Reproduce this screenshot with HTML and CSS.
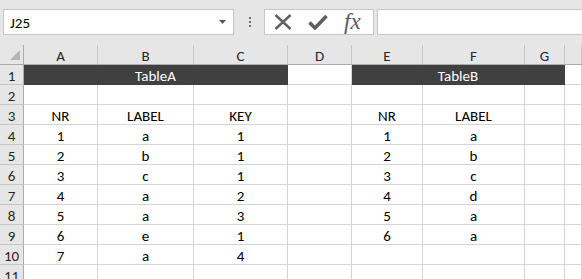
FILE: index.html
```html
<!DOCTYPE html>
<html>
<head>
<meta charset="utf-8">
<link rel="stylesheet" href="styles.css">
</head>
<body>
<div class="app">
  <div class="toolbar">
    <div class="namebox">
      <span class="namebox-text">J25</span>
      <svg class="dd" width="7" height="4" viewBox="0 0 7 4"><path d="M0 0h7L3.5 4z" fill="#595959"/></svg>
    </div>
    <div class="dots"><span></span><span></span><span></span></div>
    <div class="fxbox">
      <svg class="ic-x" width="18" height="16" viewBox="0 0 18 16"><path d="M1.5 1L16.5 15M16.5 1L1.5 15" stroke="#606060" stroke-width="2.4" fill="none"/></svg>
      <svg class="ic-check" width="20" height="16" viewBox="0 0 20 16"><path d="M1.5 8.5L7 14L18.5 2" stroke="#606060" stroke-width="3.6" fill="none"/></svg>
      <span class="fx">fx</span>
    </div>
    <div class="formula"></div>
  </div>
  <div class="sheet">
    <div class="corner"><span class="tri"></span></div>
    <div class="ch">A</div><div class="ch">B</div><div class="ch">C</div><div class="ch">D</div><div class="ch">E</div><div class="ch">F</div><div class="ch">G</div><div class="ch"></div>

    <div class="rh">1</div>
    <div class="c band span3">TableA</div><div class="c"></div><div class="c band span3">TableB</div><div class="c"></div>

    <div class="rh">2</div>
    <div class="c"></div><div class="c"></div><div class="c"></div><div class="c"></div><div class="c"></div><div class="c"></div><div class="c"></div><div class="c"></div>

    <div class="rh">3</div>
    <div class="c">NR</div><div class="c">LABEL</div><div class="c">KEY</div><div class="c"></div><div class="c">NR</div><div class="c">LABEL</div><div class="c"></div><div class="c"></div>

    <div class="rh">4</div>
    <div class="c">1</div><div class="c">a</div><div class="c">1</div><div class="c"></div><div class="c">1</div><div class="c">a</div><div class="c"></div><div class="c"></div>

    <div class="rh">5</div>
    <div class="c">2</div><div class="c">b</div><div class="c">1</div><div class="c"></div><div class="c">2</div><div class="c">b</div><div class="c"></div><div class="c"></div>

    <div class="rh">6</div>
    <div class="c">3</div><div class="c">c</div><div class="c">1</div><div class="c"></div><div class="c">3</div><div class="c">c</div><div class="c"></div><div class="c"></div>

    <div class="rh">7</div>
    <div class="c">4</div><div class="c">a</div><div class="c">2</div><div class="c"></div><div class="c">4</div><div class="c">d</div><div class="c"></div><div class="c"></div>

    <div class="rh">8</div>
    <div class="c">5</div><div class="c">a</div><div class="c">3</div><div class="c"></div><div class="c">5</div><div class="c">a</div><div class="c"></div><div class="c"></div>

    <div class="rh">9</div>
    <div class="c">6</div><div class="c">e</div><div class="c">1</div><div class="c"></div><div class="c">6</div><div class="c">a</div><div class="c"></div><div class="c"></div>

    <div class="rh">10</div>
    <div class="c">7</div><div class="c">a</div><div class="c">4</div><div class="c"></div><div class="c"></div><div class="c"></div><div class="c"></div><div class="c"></div>

    <div class="rh">11</div>
    <div class="c"></div><div class="c"></div><div class="c"></div><div class="c"></div><div class="c"></div><div class="c"></div><div class="c"></div><div class="c"></div>
  </div>
</div>
</body>
</html>
```
FILE: styles.css
```css
html, body {
  margin: 0;
  padding: 0;
  width: 582px;
  height: 279px;
  overflow: hidden;
  background: #e6e6e6;
}
.app {
  font-family: Carlito, Calibri, "Liberation Sans", sans-serif;
  color: #000;
}
.toolbar {
  display: flex;
  align-items: flex-start;
  height: 45px;
  box-sizing: border-box;
  padding: 9px 0 0 3px;
}
.namebox {
  width: 231px;
  height: 26px;
  box-sizing: border-box;
  border: 1px solid #c6c6c6;
  background: #fff;
  display: flex;
  align-items: center;
  padding: 0 7px 0 6px;
}
.namebox-text {
  flex: 1;
  font-size: 15px;
  color: #000;
  padding-top: 1px;
}
.dd {
  display: block;
}
.dots {
  width: 30px;
  height: 26px;
  display: flex;
  flex-direction: column;
  align-items: center;
  justify-content: center;
  gap: 2px;
  padding-left: 1px;
  box-sizing: border-box;
}
.dots span {
  width: 2px;
  height: 2px;
  background: #707070;
}
.fxbox {
  width: 110px;
  height: 26px;
  box-sizing: border-box;
  border: 1px solid #c6c6c6;
  background: #fff;
  display: flex;
  align-items: center;
  padding-left: 9px;
}
.ic-x { display: block; margin-right: 16px; }
.ic-check { display: block; margin-right: 16px; }
.fx {
  font-family: "Liberation Serif", serif;
  font-style: italic;
  font-size: 23px;
  color: #5a5a5a;
  line-height: 20px;
  margin-top: -1px;
}
.formula {
  flex: 1;
  height: 26px;
  box-sizing: border-box;
  border: 1px solid #c6c6c6;
  border-right: none;
  background: #fff;
  margin-left: 3px;
}
.sheet {
  display: grid;
  grid-template-columns: 24px 74px 96px 94px 64px 71px 102px 40px 1fr;
  grid-auto-rows: 20px;
  background: #fff;
}
.sheet > div {
  box-sizing: border-box;
  display: flex;
  align-items: center;
  justify-content: center;
  font-size: 15px;
  line-height: 20px;
  padding-top: 2px;
}
.corner {
  background: #e6e6e6;
  border-right: 1px solid #ababab;
  border-bottom: 1px solid #ababab;
  position: relative;
}
.tri {
  position: absolute;
  right: 3px;
  bottom: 4px;
  width: 0;
  height: 0;
  border-left: 10px solid transparent;
  border-bottom: 10px solid #b4b4b4;
}
.ch {
  background: #e6e6e6;
  border-right: 1px solid #c6c6c6;
  border-bottom: 1px solid #ababab;
  color: #262626;
}
.rh {
  background: #e6e6e6;
  border-right: 1px solid #ababab;
  border-bottom: 1px solid #c6c6c6;
  color: #262626;
}
.c {
  border-right: 1px solid #d4d4d4;
  border-bottom: 1px solid #d4d4d4;
}
.band {
  background: #404040;
  color: #fff;
  border-color: #404040;
}
.span3 {
  grid-column: span 3;
}
```
